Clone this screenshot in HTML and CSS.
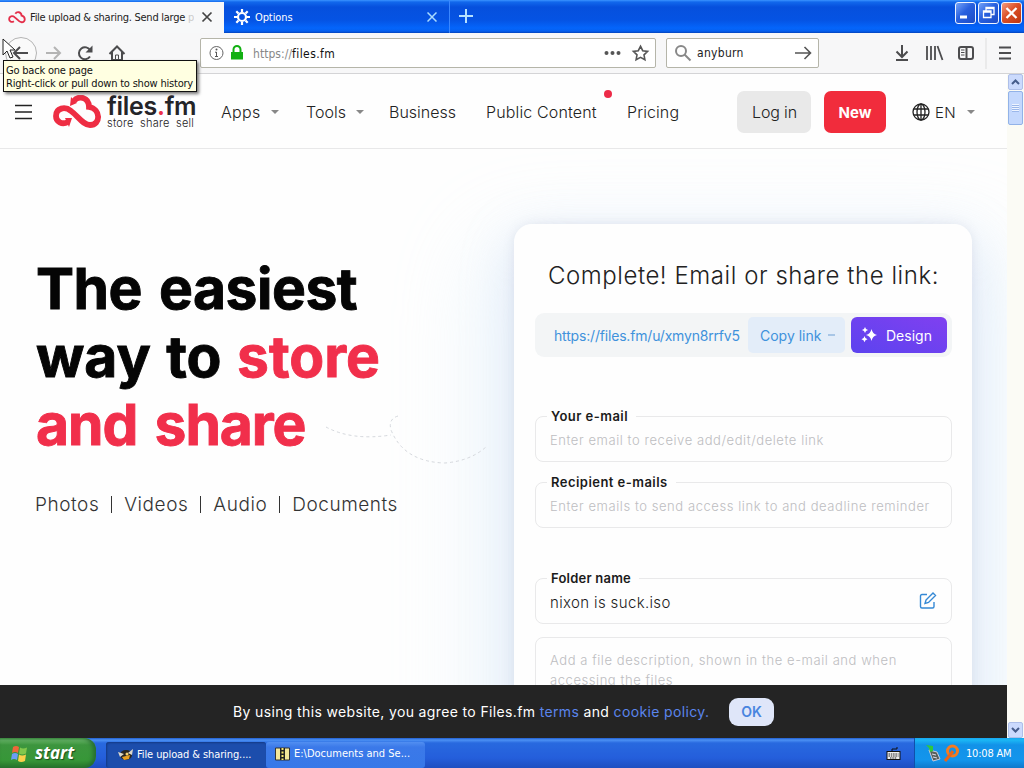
FILE: index.html
```html
<!DOCTYPE html>
<html lang="en">
<head>
<meta charset="utf-8">
<title>File upload &amp; sharing</title>
<link rel="stylesheet" href="styles.css">
</head>
<body>
<div class="desktop">
  <header class="tabbar">
    <div class="tab tab-active">
      <svg class="favicon" width="18" height="13" viewBox="0 0 49 34"><path class="cloud" d="M20 7C24 0 36 1 37 12C48 14 49 30 37 30C30 30 25 21 18 16C12 11 3 13 3 21C3 28 10 31 16 27"/></svg>
      <span class="tab-title">File upload &amp; sharing. Send large <i>p</i></span>
      <svg class="tab-close" width="12" height="12" viewBox="0 0 12 12"><path d="M1.500 1.500l9 9M10.500 1.500l-9 9"/></svg>
    </div>
    <div class="tab tab-blue">
      <svg width="16" height="16" viewBox="0 0 16 16" class="gear"><circle cx="8" cy="8" r="4"/><path d="M8 0v3M8 13v3M0 8h3M13 8h3M2.300 2.300l2.200 2.200M11.500 11.500l2.200 2.200M13.700 2.300l-2.200 2.200M4.500 11.500l-2.200 2.200"/></svg>
      <span class="options">Options</span>
      <svg class="tab-close light" width="10" height="10" viewBox="0 0 10 10"><path d="M.5 .5l9 9M9.500 .5l-9 9"/></svg>
    </div>
    <svg class="plus" width="14" height="14" viewBox="0 0 14 14"><path d="M7 0v14M0 7h14"/></svg>
    <div class="winbtns">
      <span class="winbtn"><svg width="19" height="20" viewBox="0 0 19 20"><path d="M4 14h7" stroke-width="3"/></svg></span>
      <span class="winbtn"><svg width="19" height="20" viewBox="0 0 19 20"><path d="M7 8V4.500h8v7h-3M4.500 8h7.500v6.500H4.500zM4.500 9h7M7 5.500h8" stroke-width="1.300"/></svg></span>
      <span class="winbtn winclose"><svg width="19" height="20" viewBox="0 0 19 20"><path d="M4.500 5l10 10M14.500 5l-10 10" stroke-width="2.300"/></svg></span>
    </div>
  </header>

  <div class="toolbar">
    <div class="navbtns">
      <svg width="200" height="40" viewBox="0 0 200 40" class="ico"><circle cx="21" cy="20" r="15.500" class="ring"/><path d="M28 20H14M20 14l-6 6 6 6"/><path class="faded" d="M46 20h14M54 14l6 6-6 6"/><path d="M90.300 17.500A6 6 0 1 0 90 23.500"/><path class="fill" d="M92.500 12.500v7h-7z"/><path d="M109.500 21l7.500-7.500 7.500 7.500M112 19v8h10v-8"/><path d="M115.500 27v-5h3v5" stroke-width="1"/></svg>
    </div>
    <div class="urlbar">
      <svg width="46" height="28" viewBox="0 0 46 28"><circle cx="15.500" cy="14" r="6.500" fill="none" stroke="#666"/><path d="M15.500 13v4.500M14 13.200h1.500M14 17.500h3" stroke="#555" fill="none"/><circle cx="15.500" cy="10.500" r="1" fill="#555"/><path d="M30 13h12v7.500H30z" fill="#12b012"/><path d="M32.500 13v-2.500a3.500 3.500 0 0 1 7 0V13" stroke="#12b012" stroke-width="2" fill="none"/></svg>
      <span class="url"><em>https://</em>files.fm</span>
      <svg class="urlend" width="50" height="28" viewBox="0 0 50 28"><g fill="#555"><circle cx="6.500" cy="14" r="2"/><circle cx="12.500" cy="14" r="2"/><circle cx="18.500" cy="14" r="2"/></g><path d="M40.500 7.200l2.200 4.500 4.900.7-3.600 3.400.9 4.900-4.400-2.300-4.400 2.300.9-4.900-3.600-3.400 4.900-.7z" fill="none" stroke="#555" stroke-width="1.600"/></svg>
    </div>
    <div class="searchbar">
      <svg width="30" height="28" viewBox="0 0 30 28" fill="none" stroke="#888" stroke-width="2"><circle cx="14" cy="12" r="5"/><path d="M17.500 15.500l6 6"/></svg>
      <span>anyburn</span>
      <svg class="go" width="20" height="28" viewBox="0 0 20 28"><path d="M1 14h15M10.500 8l6 6-6 6"/></svg>
    </div>
    <svg width="136" height="40" viewBox="0 0 136 40" class="ico tools"><path d="M14 12v12M8.500 18.500l5.500 5.500 5.500-5.500M8 27h12"/><path d="M39 13v14M43 13v14M47 13v14M49.500 13l5 14" stroke-width="1.800"/><rect x="71" y="14" width="14" height="12" rx="2"/><path d="M78.500 14v12"/><path d="M73 17h3.500M73 19.500h3.500M73 22h3.500" stroke-width="1"/><path d="M98 5v31" stroke="#ddd" stroke-width="1"/><path d="M111 14.500h12M111 20h12M111 25.500h12" stroke-width="1.900"/></svg>
  </div>

  <div class="viewport">
    <main class="page">
      <nav class="sitenav">
        <svg class="burger" width="18" height="16" viewBox="0 0 18 16"><path d="M0 1.500h17M0 8h17M0 14.500h17"/></svg>
        <div class="brand">
          <svg width="49" height="34" viewBox="0 0 49 34"><path class="cloud big" d="M21 6C25 0 36 2 36 12C48 14 48 30 37 30C30 30 25 21 18 16C12 11 3 13 3 21C3 27 9 30 15 27"/><path d="M18 2l6 6-7 3zM12 23h7l-3 9z" fill="#ee2d43"/></svg>
          <div class="brandtext"><b>files<i>.</i>fm</b><small>store&nbsp; share&nbsp; sell</small></div>
        </div>
        <span class="n-apps">Apps</span><span class="caret"></span>
        <span class="n-tools">Tools</span><span class="caret"></span>
        <span class="n-biz">Business</span>
        <span class="n-public">Public Content<i class="dot"></i></span>
        <span class="n-price">Pricing</span>
        <span class="btn login">Log in</span>
        <span class="btn new">New</span>
        <svg class="globe" width="18" height="18" viewBox="0 0 18 18"><circle cx="9" cy="9" r="8"/><ellipse cx="9" cy="9" rx="4" ry="8"/><path d="M9 1v16M1.800 6h14.400M1.800 12h14.400"/></svg>
        <span class="n-lang">EN</span><span class="caret"></span>
      </nav>

      <section class="hero">
        <div class="pitch">
          <h1><span class="l1">The easiest</span><br><span class="l2">way to <em>store</em></span><br><em class="l3">and share</em></h1>
          <p><span>Photos</span><i></i><span>Videos</span><i></i><span>Audio</span><i></i><span>Documents</span></p>
        </div>
        <div class="glow"></div>
        <svg class="trail" width="170" height="60" viewBox="0 0 170 60"><path d="M2 19Q28 33 67 27M74 8Q64 11 67 22Q80 54 121 55Q146 53 162 39"/></svg>
        <div class="card">
          <h2>Complete! Email or share the link:</h2>
          <div class="linkbar">
            <span class="link">https://files.fm/u/xmyn8rrfv5</span>
            <span class="copy"><span>Copy link</span><i></i></span>
            <span class="design"><svg width="17" height="16" viewBox="0 0 17 16"><path d="M10.500 2q1 5 5.500 6-4.500 1-5.500 6-1-5-5.500-6 4.500-1 5.500-6zM4 0q.5 2.500 3 3-2.500.5-3 3-.5-2.500-3-3 2.500-.5 3-3zM3.500 9q.5 2.800 3 3.300-2.500.5-3 3-.5-2.500-3-3 2.500-.5 3-3.300z"/></svg><span>Design</span></span>
          </div>
          <div class="field f-first"><label class="la">Your e-mail</label><span class="ph">Enter email to receive add/edit/delete link</span></div>
          <div class="field f-second"><label class="lb">Recipient e-mails</label><span class="ph">Enter emails to send access link to and deadline reminder</span></div>
          <div class="field f-third"><label class="lc">Folder name</label><span class="val">nixon is suck.iso</span>
            <svg class="edit" width="18" height="18" viewBox="0 0 18 18"><path d="M8 2.500H3Q1.500 2.500 1.500 4v10.500Q1.500 16 3 16h10.500Q15 16 15 14.500V10M7 8l7-7 2.500 2.500-7 7L6 11.500z"/></svg>
          </div>
          <div class="field area"><span class="ph">Add a file description, shown in the e-mail and when<br>accessing the files</span></div>
        </div>
      </section>
      <div class="cookie">
        <span class="msg">By using this website, you agree to Files.fm <a>terms</a> and <a>cookie policy.</a></span>
        <span class="ok">OK</span>
      </div>
    </main>
    <div class="scroll">
      <span class="sbtn"><svg width="13" height="14" viewBox="0 0 13 14"><path d="M3 9l3.500-3.500L10 9"/></svg></span>
      <span class="thumb"><i></i></span>
      <span class="sbtn bottom"><svg width="13" height="14" viewBox="0 0 13 14"><path d="M3 5l3.500 3.500L10 5"/></svg></span>
    </div>
  </div>

  <footer class="taskbar">
    <div class="start">
      <svg width="18" height="19" viewBox="0 0 18 19"><path d="M2 3q3-2 6 0L7 9q-3-2-6 0z" fill="#f0663a"/><path d="M9 3.500q3 2 7 0L15 9.500q-4 2-7 0z" fill="#82c74c"/><path d="M1 10q3-2 6 0L6 16q-3-2-6 0z" fill="#6c9df5"/><path d="M8 10.500q3 2 7 0L14 17q-4 2-7 0z" fill="#fbd04b"/></svg>
      <span>start</span>
    </div>
    <div class="task t1"><svg width="16" height="14" viewBox="0 0 16 14"><ellipse cx="8" cy="7" rx="6" ry="5" fill="#2a2620"/><path d="M0 4l6 2-4 3zM10 5l5-4-1 6z" fill="#ddd8c8"/><path d="M4 9l8-2-1 4-5 1z" fill="#e8a020"/><circle cx="9" cy="6" r="1.500" fill="#f4d070"/></svg><span>File upload &amp; sharing....</span></div>
    <div class="task t2"><svg width="15" height="14" viewBox="0 0 15 14"><path d="M.5 1h14v12H.5z" fill="#f3e79a" stroke="#333"/><path d="M5 1h5v12H5z" fill="#222"/><path d="M7.500 1v12" stroke="#f5e56b" stroke-dasharray="2 1.500" stroke-width="2"/></svg><span>E:\Documents and Se...</span></div>
    <svg class="kbd" width="15" height="13" viewBox="0 0 15 13"><path d="M6 4V2h5V0" fill="none" stroke="#111"/><rect x="1" y="4.500" width="13" height="8" fill="#eee" stroke="#111"/><path d="M2.500 7h10M2.500 9h10M4 11h7" stroke="#222" stroke-dasharray="1.500 .8"/></svg>
    <div class="tray">
      <svg width="34" height="18" viewBox="0 0 34 18"><path d="M3 6l8 2 3 7-7 2z" fill="#59605c" stroke="#ccd"/><path d="M6 10l4 1M7 13l4 1" stroke="#dde"/><path d="M0 1l7 1v5l-3 1-1-4z" fill="#30c83c"/><circle cx="26.500" cy="7" r="5" fill="none" stroke="#f47b20" stroke-width="3"/><path d="M24 11l-5 6M27 7l-3 4" stroke="#e9651a" stroke-width="3"/></svg>
      <span>10:08 AM</span>
    </div>
  </footer>

  <div class="tooltip"><span>Go back one page</span><span class="tt2">Right-click or pull down to show history</span></div>
  <svg class="cursor" width="14" height="22" viewBox="0 0 14 22"><path d="M1 1v16l4-4 3 7 3-1-3-7h5z"/></svg>
</div>
</body>
</html>
```
FILE: styles.css
```css
* { box-sizing: border-box; }
body { margin: 0; background: #fff; font-family: Inter, sans-serif; }
i, em { font-style: normal; }
svg { flex: none; display: block; }
.desktop { width: 1024px; height: 768px; overflow: hidden; position: relative; display: flex; flex-direction: column; }

/* Browser chrome */
.tabbar, .toolbar, .tooltip, .taskbar { font-family: "DejaVu Sans Condensed", "DejaVu Sans", sans-serif; font-stretch: condensed; font-size: 11px; white-space: nowrap; }
.tabbar { height: 33px; flex: none; display: flex; align-items: flex-start; background: linear-gradient(#3b94ff 0, #1268ec 2px, #0650dd 7px, #0553e3 20px, #0465fb 28px, #0560f0 31px, #0343bd 33px); }
.tab { display: flex; align-items: center; }
.tab-active { margin-top: 2px; width: 224px; height: 31px; padding-left: 8px; background: #f7f8f9; }
.favicon { margin-right: 4px; }
.cloud { fill: none; stroke: #e42f4a; stroke-width: 5; }
.cloud.big { stroke-width: 5.8; stroke: #ee2d43; }
.tab-title { width: 164px; letter-spacing: -.26px; overflow: hidden; color: #222; }
.tab-title i { color: #ccc; }
.tab-close { margin-left: 7px; margin-top: -1px; fill: none; stroke: #444; stroke-width: 1.7; }
.tab-blue { height: 33px; width: 226px; padding-left: 10px; border-right: 1px solid #3a87ff; color: #fff; }
.gear { fill: none; stroke: #fff; stroke-width: 2.2; }
.options { margin: 1px 0 0 5px; width: 171px; letter-spacing: -.1px; }
.tab-close.light { margin-left: 1px; margin-top: 1px; stroke: #a9dcff; stroke-width: 1.5; }
.plus { margin: 9px 0 0 9px; stroke: #b5e1ff; stroke-width: 2; }
.winbtns { display: flex; gap: 2px; margin: 2px 2px 0 auto; }
.winbtn { width: 21px; height: 22px; border: 1px solid #eef4ff; border-radius: 3px; background: linear-gradient(135deg, #75a3f8, #2860df 45%, #1c4bc5); }
.winbtn svg { fill: none; stroke: #fff; }
.winclose { background: linear-gradient(135deg, #f39b7e, #dc5028 45%, #bd350f); }
.toolbar { height: 40px; flex: none; display: flex; align-items: center; background: #f7f7f8; font-size: 12px; }
.navbtns { width: 200px; height: 40px; }
.ico { fill: none; stroke: #4c4c4e; stroke-width: 2; }
.ring { fill: #fafafa; stroke: #b4b4b4; stroke-width: 1; }
.ico .faded { stroke: #b4b4b4; }
.ico .fill { fill: #4c4c4e; stroke: none; }
.urlbar, .searchbar { height: 30px; display: flex; align-items: center; background: #fff; border: 1px solid #b5b5a9; border-radius: 2px; }
.urlbar { width: 456px; padding-right: 5px; }
.url { flex: 1; margin: 1px 0 0 6px; color: #111; letter-spacing: .4px; }
.url em { color: #888; letter-spacing: .05px; }
.searchbar { width: 153px; margin-left: 10px; color: #222; letter-spacing: .3px; }
.go { margin-left: auto; margin-right: 4px; fill: none; stroke: #555; stroke-width: 1.6; }
.tools { margin-left: auto; }

/* Page */
.viewport { height: 665px; flex: none; display: flex; border-top: 1px solid #d4d4d6; }
.page { width: 1007px; height: 664px; position: relative; overflow: hidden; background: #fefefe; }
.sitenav { height: 75px; display: flex; align-items: center; position: relative; z-index: 2; background: #fefefe; border-bottom: 1px solid #e8e8e9; padding: 2px 0 0 15px; font-size: 16px; font-weight: 300; color: #222; white-space: nowrap; }
.sitenav > * { flex: none; }
.burger { stroke: #222; stroke-width: 1.7; margin-right: 20px; }
.brand { width: 168px; display: flex; gap: 5px; align-items: center; }
.brandtext { display: flex; flex-direction: column; width: 92px; }
.brandtext b { font: 600 25px/23px Inter, sans-serif; letter-spacing: -.3px; color: #242428; }
.brandtext b i { color: #ed3148; }
.brandtext small { font: 300 11px/11px Inter, sans-serif; color: #222; letter-spacing: .2px; }
.caret { width: 0; border: 4px solid transparent; border-top-color: #888; border-bottom: 0; }
.n-apps { width: 50px; letter-spacing: .3px; }
.n-tools { margin-left: 27px; width: 50px; }
.n-biz { margin-left: 25px; width: 97px; }
.n-public { width: 141px; position: relative; letter-spacing: .15px; }
.dot { position: absolute; width: 8px; height: 8px; border-radius: 50%; background: #ed2b48; left: 118px; top: -12px; }
.n-price { width: 110px; letter-spacing: .1px; }
.btn { height: 42px; border-radius: 7px; line-height: 43px; text-align: center; }
.login { width: 74px; padding-left: 1px; letter-spacing: -.15px; background: #e9e9e9; }
.new { width: 62px; margin-left: 13px; background: #f12c3c; color: #fff; font-weight: 700; font-size: 15px; }
.globe { margin-left: 26px; fill: none; stroke: #222; stroke-width: 1.3; }
.n-lang { margin-left: 5px; width: 32px; font-size: 15px; letter-spacing: .3px; }

.hero { height: 590px; display: flex; align-items: flex-start; position: relative; }
.pitch { width: 514px; padding: 106px 0 0 36px; flex: none; position: relative; z-index: 2; }
h1 { margin: 0; font-size: 57px; line-height: 68px; font-weight: 700; color: #050505; white-space: nowrap; -webkit-text-stroke: .9px currentColor; }
.l1 { letter-spacing: -.5px; word-spacing: 4px; }
.l2 { letter-spacing: 0; word-spacing: 2px; }
.l3 { letter-spacing: -1.1px; word-spacing: 5px; }
h1 em { color: #f12f4b; }
.pitch p { margin: 28px 0 0; display: flex; align-items: center; height: 34px; font-size: 19px; letter-spacing: .55px; font-weight: 300; color: #333; }
.pitch p span { margin-left: -1px; }
.pitch p i { width: 1px; height: 17px; background: #333; margin: 0 13px 0 12px; }
.glow { position: absolute; left: 514px; top: 75px; width: 458px; height: 600px; border-radius: 20px; box-shadow: 0 0 12px rgba(110,120,150,.14), 0 14px 50px 4px rgba(185,200,240,.26), 0 50px 80px 40px rgba(205,232,248,.3); }
.trail { position: absolute; left: 324px; top: 259px; fill: none; stroke: #d5d8dd; stroke-width: 1; stroke-dasharray: 3 3; }
.card { position: relative; margin-top: 75px; width: 458px; height: 540px; padding: 30px 20px 0 21px; border-radius: 18px; background: #fefefe; }
h2 { margin: 0 0 0 13px; height: 59px; font-size: 24px; letter-spacing: .55px; line-height: 44px; font-weight: 300; color: #222; white-space: nowrap; }
.linkbar { width: 417px; height: 44px; border-radius: 9px; display: flex; align-items: center; background: #f3f5f6; font-size: 14px; white-space: nowrap; color: #3f92dc; }
.link { width: 213px; padding-left: 19px; letter-spacing: -.18px; }
.copy { width: 97px; height: 36px; border-radius: 5px; padding-left: 12px; display: flex; align-items: center; gap: 7px; background: #e3edf9; }
.copy i { width: 7px; height: 2px; background: #a8c6e6; }
.design { width: 96px; height: 36px; margin-left: 6px; border-radius: 6px; display: flex; align-items: center; gap: 8px; padding-left: 10px; background: linear-gradient(20deg, #5c43ef, #8040f0); color: #fff; }
.design svg { fill: #fff; }
.field { position: relative; height: 46px; width: 417px; border: 1px solid #e9e9ea; border-radius: 8px; padding: 12px 14px 0; font-size: 14px; line-height: 22px; white-space: nowrap; font-weight: 300; color: #1b1b1b; }
.field label { position: absolute; left: 11px; top: -12px; padding: 0 8px 0 4px; background: #fefefe; font-size: 13px; font-weight: 600; }
.la, .lb { letter-spacing: .46px; }
.lc { letter-spacing: .22px; }
.f-first { margin-top: 59px; }
.f-second { margin-top: 20px; }
.f-third { margin-top: 50px; padding-top: 13px; display: flex; justify-content: space-between; font-size: 15px; }
.val { letter-spacing: .36px; }
.ph { color: #bdbdc1; font-size: 13px; letter-spacing: .57px; }
.edit { fill: none; stroke: #3589d5; stroke-width: 1.4; }
.area { margin-top: 13px; height: 80px; line-height: 19px; }
.cookie { position: absolute; z-index: 3; left: 0; bottom: 0; width: 1007px; height: 53px; display: flex; align-items: center; padding-left: 233px; background: #242424; color: #fff; font-size: 14px; white-space: nowrap; }
.msg { width: 496px; letter-spacing: .36px; }
.msg a { color: #5b85ec; }
.ok { width: 45px; height: 28px; border-radius: 9px; line-height: 28px; text-align: center; background: #dfe6f9; color: #4985df; font-weight: 600; }
.scroll { width: 17px; height: 664px; display: flex; flex-direction: column; padding: 0 1px; background: #fbfbf5; }
.sbtn { width: 15px; height: 16px; border: 1px solid #aebfe9; border-radius: 2px; background: #cbdafd; }
.sbtn svg { fill: none; stroke: #465d8c; stroke-width: 2; }
.thumb { width: 15px; height: 34px; margin-top: 1px; padding: 12px 3px; border: 1px solid #92b2e8; border-radius: 2px; background: #c4d8fd; }
.thumb i { display: block; height: 8px; background: repeating-linear-gradient(#eef4ff 0 1px, #9bb7ea 1px 2px); }
.bottom { margin-top: auto; }

/* Taskbar and overlays */
.taskbar { height: 30px; flex: none; display: flex; align-items: center; color: #fff; background: linear-gradient(#1f5ccd 0, #4c91f4 2px, #2869df 5px, #245edb 20px, #1e4ec0 30px); }
.start { width: 96px; height: 30px; display: flex; align-items: center; gap: 6px; padding-left: 11px; border-radius: 0 12px 12px 0; background: linear-gradient(#4b9c4b 0, #63b163 2px, #3c953e 7px, #379738 22px, #27752b 30px); font: italic bold 17px "Open Sans", sans-serif; text-shadow: 1px 1px 1px #1b4d1d; box-shadow: inset -3px 0 4px #266c31; }
.start span { margin-top: -2px; }
.task { display: flex; align-items: center; height: 26px; margin-top: 3px; border-radius: 3px; padding-left: 9px; gap: 3px; }
.t1 { margin-left: 10px; width: 160px; padding-left: 12px; letter-spacing: -.1px; background: #1c4dac; box-shadow: inset 1px 1px 2px #143985; }
.t2 { width: 159px; gap: 4px; padding-bottom: 2px; letter-spacing: 0; background: linear-gradient(#528ff1, #3b79e9 5px, #3778e8); }
.kbd { margin-left: auto; }
.tray { width: 110px; height: 30px; margin-left: 13px; padding-left: 11px; display: flex; align-items: center; gap: 6px; background: linear-gradient(#16a5ef 0, #1bb7f5 2px, #1292e8 7px, #1395ec 22px, #1078cb 30px); border-left: 1px solid #1050ab; letter-spacing: -.2px; }
.tooltip { position: absolute; z-index: 8; left: 3px; top: 60px; width: 194px; height: 32px; padding: 3px 2px; background: #ffffe1; border: 1px solid #111; box-shadow: 2px 2px 3px #777; display: flex; flex-direction: column; line-height: 13px; color: #111; }
.tooltip span { align-self: flex-start; letter-spacing: -.2px; }
.cursor { position: absolute; z-index: 9; left: 2px; top: 38px; fill: #fff; stroke: #222; }
```
